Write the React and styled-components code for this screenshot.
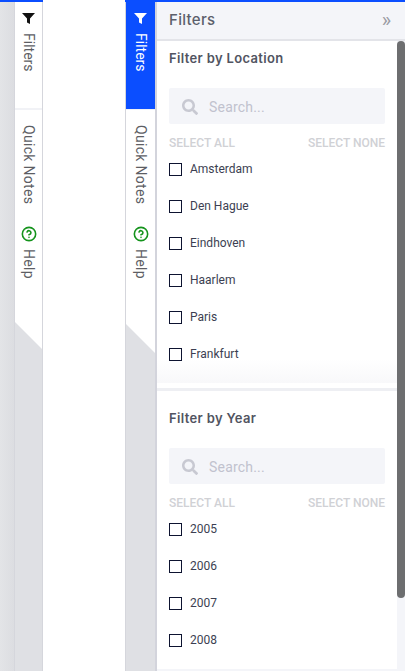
import React from 'react';
import styled, { createGlobalStyle } from 'styled-components';
import { FaSearch } from 'react-icons/fa';
import { CircleHelp } from 'lucide-react';

const GlobalStyle = createGlobalStyle`
  html, body {
    margin: 0;
    padding: 0;
    background: #fff;
    font-family: Roboto, "Liberation Sans", sans-serif;
  }
`;

const Page = styled.div`
  display: flex;
  justify-content: space-between;
  width: 405px;
  height: 671px;
  overflow: hidden;
`;

const LeftShell = styled.div`
  display: flex;
  width: 43px;
  border-top: 2px solid #0b4eff;
`;

const RightShell = styled.div`
  display: flex;
  width: 280px;
  border-top: 2px solid #0b4eff;
`;

const Gutter = styled.div`
  width: 14px;
  background: linear-gradient(to right, #e3e4e7, #dcdde1);
`;

const Rail = styled.div`
  display: flex;
  flex-direction: column;
  box-sizing: border-box;
  width: ${(p) => p.$width}px;
  background: #dfe0e4;
  border-left: 1px solid #d5d6dc;
  border-right: ${(p) => (p.$edge ? '1px solid #d5d6dc' : 'none')};
`;

const Tab = styled.div`
  display: flex;
  flex-direction: column;
  align-items: center;
  box-sizing: border-box;
  height: ${(p) => p.$height}px;
  padding-top: ${(p) => p.$top}px;
  background: ${(p) => (p.$active ? '#0b4eff' : '#fff')};
  color: ${(p) => (p.$active ? '#fff' : '#5d5e64')};
  border-bottom: ${(p) => (p.$line ? '2px solid #f1f2f6' : 'none')};
  clip-path: ${(p) =>
    p.$fold ? `polygon(0 0, 100% 0, 100% 100%, 0 calc(100% - ${p.$fold}px))` : 'none'};
`;

const TabGap = styled.div`
  height: 1px;
  background: #f1f2f6;
`;

const TabLabel = styled.span`
  writing-mode: vertical-rl;
  font-size: 14px;
  line-height: 16px;
  letter-spacing: ${(p) => p.$spacing ?? 0.3}px;
  margin-top: ${(p) => p.$gap}px;
`;

const Funnel = styled.svg`
  display: block;
  width: 13px;
  height: 11px;
  fill: ${(p) => (p.$active ? '#fff' : '#111')};
`;

const HelpIcon = styled(CircleHelp)`
  width: 16px;
  height: 16px;
  color: #14931c;
`;

const Strip = styled.div`
  width: 2px;
  background: #d3d4dc;
`;

const Panel = styled.div`
  flex: 1;
  display: flex;
  flex-direction: column;
  min-width: 0;
`;

const PanelHeader = styled.div`
  display: flex;
  align-items: center;
  justify-content: space-between;
  box-sizing: border-box;
  height: 39px;
  padding: 0 14px 2px 12px;
  background: #f4f5f9;
  border-bottom: 2px solid #e3e4e9;
`;

const PanelTitle = styled.span`
  font-family: Inter, sans-serif;
  font-size: 15px;
  font-weight: 500;
  letter-spacing: 0.3px;
  color: #5c5f6b;
`;

const Collapse = styled.span`
  font-size: 20px;
  line-height: 20px;
  color: #9a9ba3;
`;

const Body = styled.div`
  flex: 1;
  display: flex;
  min-height: 0;
  border-bottom: 2px solid #f4f5f9;
`;

const Content = styled.div`
  flex: 1;
  min-width: 0;
  overflow: hidden;
`;

const Track = styled.div`
  width: 8px;
  background: #f4f5f9;
`;

const Thumb = styled.div`
  height: 557px;
  background: #6d6e70;
  border-radius: 4px;
`;

const Section = styled.section`
  box-sizing: border-box;
  padding: ${(p) => (p.$first ? '9px' : '19px')} 12px 10px;
  background: ${(p) =>
    p.$first ? 'linear-gradient(to bottom, #fff calc(100% - 24px), #f8f8fa)' : '#fff'};
`;

const Divider = styled.div`
  height: 3px;
  margin-top: 5px;
  background: #eeeff3;
`;

const SectionTitle = styled.h3`
  margin: 0;
  height: 16px;
  font-family: Inter, sans-serif;
  font-size: 13px;
  line-height: 16px;
  font-weight: 600;
  letter-spacing: 0.35px;
  color: #515461;
`;

const SearchBox = styled.div`
  display: flex;
  align-items: center;
  gap: 11px;
  box-sizing: border-box;
  height: 36px;
  margin-top: 22px;
  padding: 1px 0 0 13px;
  background: #f4f5f9;
  border-radius: 2px;
`;

const SearchIcon = styled(FaSearch)`
  width: 16px;
  height: 16px;
  color: #c8c9d2;
`;

const SearchText = styled.span`
  font-size: 14px;
  letter-spacing: 0.2px;
  color: #c1c2ce;
`;

const SelectRow = styled.div`
  display: flex;
  justify-content: space-between;
  margin-top: 12px;
  font-size: 12px;
  line-height: 14px;
  font-weight: 500;
  color: #d0d1d5;
`;

const Options = styled.div`
  margin-top: 1px;
`;

const Option = styled.div`
  display: flex;
  align-items: center;
  gap: 8px;
  height: 37px;
  font-size: 12px;
  color: #3c3f52;
`;

const OptionText = styled.span`
  padding-bottom: 2px;
`;

const Box = styled.span`
  box-sizing: border-box;
  width: 13px;
  height: 13px;
  border: 1px solid #0d1330;
`;

const locations = ['Amsterdam', 'Den Hague', 'Eindhoven', 'Haarlem', 'Paris', 'Frankfurt'];
const years = ['2005', '2006', '2007', '2008'];

const Tabs = ({ width, active, fold, edge }) => (
  <Rail $width={width} $edge={edge}>
    <Tab $height={active ? 107 : 108} $top={11} $active={active} $line={!active}>
      <Funnel $active={active} viewBox="0 0 13 11">
        <path d="M0 0H13L8 5.5V11L5 9.5V5.5Z" />
      </Funnel>
      <TabLabel $gap={9} $spacing={0}>Filters</TabLabel>
    </Tab>
    {active && <TabGap />}
    <Tab $height={107} $top={15}>
      <TabLabel $gap={0}>Quick Notes</TabLabel>
    </Tab>
    <Tab $height={fold === 27 ? 132 : 136} $top={9} $fold={fold}>
      <HelpIcon strokeWidth={2.4} />
      <TabLabel $gap={7}>Help</TabLabel>
    </Tab>
  </Rail>
);

const FilterSection = ({ title, items, first }) => (
  <Section $first={first}>
    <SectionTitle>{title}</SectionTitle>
    <SearchBox>
      <SearchIcon />
      <SearchText>Search...</SearchText>
    </SearchBox>
    <SelectRow>
      <span>SELECT ALL</span>
      <span>SELECT NONE</span>
    </SelectRow>
    <Options>
      {items.map((item) => (
        <Option key={item}>
          <Box />
          <OptionText>{item}</OptionText>
        </Option>
      ))}
    </Options>
  </Section>
);

const App = () => (
  <Page>
    <GlobalStyle />
    <LeftShell>
      <Gutter />
      <Tabs width={29} fold={27} edge />
    </LeftShell>
    <RightShell>
      <Tabs width={30} fold={29} active />
      <Strip />
      <Panel>
        <PanelHeader>
          <PanelTitle>Filters</PanelTitle>
          <Collapse>»</Collapse>
        </PanelHeader>
        <Body>
          <Content>
            <FilterSection first title="Filter by Location" items={locations} />
            <Divider />
            <FilterSection title="Filter by Year" items={years} />
          </Content>
          <Track>
            <Thumb />
          </Track>
        </Body>
      </Panel>
    </RightShell>
  </Page>
);

export default App;
